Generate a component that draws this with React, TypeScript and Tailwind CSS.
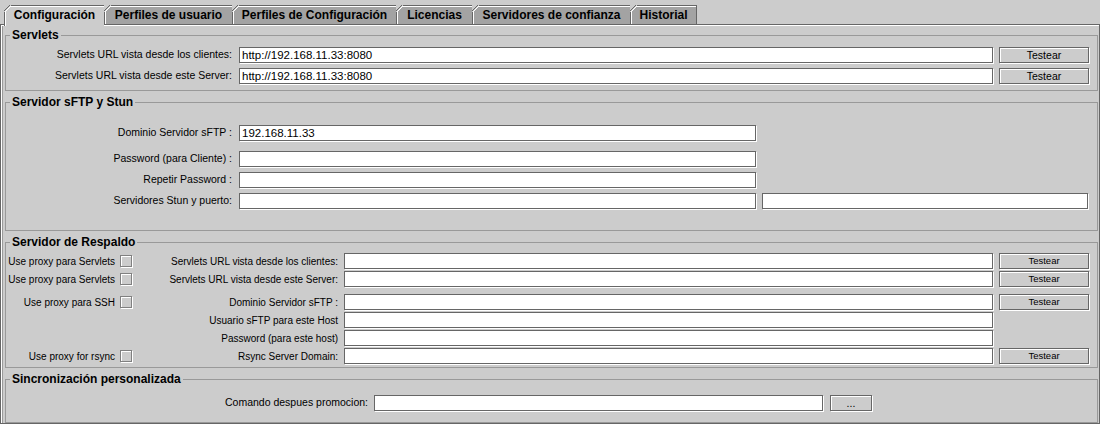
import React from "react";

const TABS = [
  { label: "Configuración", w: "w-[100px]", active: true },
  { label: "Perfiles de usuario", w: "w-[128px]" },
  { label: "Perfiles de Configuración", w: "w-[164px]" },
  { label: "Licencias", w: "w-[76px]" },
  { label: "Servidores de confianza", w: "w-[158px]" },
  { label: "Historial", w: "w-[67px]", last: true },
];

function TabCorner() {
  return (
    <svg
      className="absolute left-[-1px] top-[-1px]"
      width="7"
      height="7"
      viewBox="0 0 7 7"
      shapeRendering="crispEdges"
    >
      <polygon points="0,0 7,0 0,7" fill="#cccccc" />
      <path d="M0 6 L6 0" stroke="#666666" />
      <path d="M1 7 L7 1" stroke="#ffffff" />
    </svg>
  );
}

function Field({ w, value = "" }: { w: string; value?: string }) {
  return (
    <input
      readOnly
      defaultValue={value}
      className={`${w} h-[16px] shrink-0 border border-[#666666] bg-white pl-[2px] text-[11.5px] leading-[14px] text-black shadow-[1px_1px_0_#fff] outline-none`}
    />
  );
}

function Btn({ children, cls }: { children: React.ReactNode; cls: string }) {
  return (
    <button
      className={`${cls} h-[16px] shrink-0 border border-[#666666] bg-[#cccccc] leading-[14px] text-black shadow-[inset_1px_1px_0_#fff,1px_1px_0_#fff]`}
    >
      {children}
    </button>
  );
}

function Check() {
  return (
    <span className="h-[12px] w-[12px] shrink-0 border border-[#808080] bg-[#cccccc] shadow-[inset_1px_1px_0_#fff,1px_1px_0_#fff]" />
  );
}

function Group({
  title,
  cls,
  children,
}: {
  title: string;
  cls: string;
  children: React.ReactNode;
}) {
  return (
    <fieldset className={`${cls} w-[1093px] border border-[#999999]`}>
      <legend className="ml-[4px] px-[2px] text-[12px] font-bold leading-[14px] text-black">
        {title}
      </legend>
      {children}
    </fieldset>
  );
}

function Row({
  label,
  children,
}: {
  label: string;
  children: React.ReactNode;
}) {
  return (
    <div className="flex h-[16px] items-center">
      <div className="w-[233px] shrink-0 pr-[7px] text-right text-[10.5px]">{label}</div>
      {children}
    </div>
  );
}

function BackupRow({
  proxy,
  label,
  test,
}: {
  proxy?: string;
  label: string;
  test?: boolean;
}) {
  return (
    <div className="flex h-[16px] items-center text-[10px]">
      <div className="flex w-[128px] shrink-0 items-center justify-end gap-[5px] pr-[2px]">
        {proxy && (
          <>
            <span className="whitespace-nowrap">{proxy}</span>
            <Check />
          </>
        )}
      </div>
      <div className="w-[210px] shrink-0 whitespace-nowrap pr-[6px] text-right">{label}</div>
      <Field w="w-[649px]" />
      {test && <Btn cls="ml-[6px] w-[90px] text-[9.5px]">Testear</Btn>}
    </div>
  );
}

export default function App() {
  return (
    <div className="h-[424px] w-[1100px] overflow-hidden bg-[#cccccc] font-['Liberation_Sans',Arial,sans-serif] text-black">
      {/* tabs */}
      <div className="flex h-[24px] items-end pl-[4px]">
        {TABS.map((t) => (
          <div
            key={t.label}
            className={`${t.w} relative flex shrink-0 items-center justify-center border-l border-t border-[#666666] text-[12px] font-bold shadow-[inset_1px_1px_0_#fff] ${
              t.active ? "z-10 -mb-[2px] h-[21px] bg-[#cccccc] pb-[2px]" : "h-[19px] bg-[#a3a3a3]"
            } ${t.last ? "border-r" : ""}`}
          >
            <TabCorner />
            {t.label}
          </div>
        ))}
      </div>

      {/* content */}
      <div className="flex h-[400px] flex-col gap-[4px] border border-[#666666] pl-[4px] pr-[1px] pt-[3px] shadow-[inset_1px_1px_0_#fff,inset_2px_0_0_#999]">
        <Group title="Servlets" cls="pt-[5px] pb-[6px]">
          <div className="flex flex-col gap-[5px]">
            <Row label="Servlets URL vista desde los clientes:">
              <Field w="w-[754px]" value="http://192.168.11.33:8080" />
              <Btn cls="ml-[6px] w-[90px] text-[10.5px]">Testear</Btn>
            </Row>
            <Row label="Servlets URL vista desde este Server:">
              <Field w="w-[754px]" value="http://192.168.11.33:8080" />
              <Btn cls="ml-[6px] w-[90px] text-[10.5px]">Testear</Btn>
            </Row>
          </div>
        </Group>

        <Group title="Servidor sFTP y Stun" cls="pt-[16px] pb-[21px]">
          <div className="flex flex-col gap-[5px]">
            <div className="mb-[5px]">
              <Row label="Dominio Servidor sFTP :">
                <Field w="w-[517px]" value="192.168.11.33" />
              </Row>
            </div>
            <Row label="Password (para Cliente) :">
              <Field w="w-[517px]" />
            </Row>
            <Row label="Repetir Password :">
              <Field w="w-[517px]" />
            </Row>
            <Row label="Servidores Stun y puerto:">
              <Field w="w-[517px]" />
              <div className="ml-[6px] flex">
                <Field w="w-[326px]" />
              </div>
            </Row>
          </div>
        </Group>

        <Group title="Servidor de Respaldo" cls="pt-[4px] pb-[3px]">
          <div className="flex flex-col gap-[2px]">
            <BackupRow proxy="Use proxy para Servlets" label="Servlets URL vista desde los clientes:" test />
            <BackupRow proxy="Use proxy para Servlets" label="Servlets URL vista desde este Server:" test />
            <div className="mt-[5px]">
              <BackupRow proxy="Use proxy para SSH" label="Dominio Servidor sFTP :" test />
            </div>
            <BackupRow label="Usuario sFTP para este Host" />
            <BackupRow label="Password (para este host)" />
            <BackupRow proxy="Use proxy for rsync" label="Rsync Server Domain:" test />
          </div>
        </Group>

        <Group title="Sincronización personalizada" cls="pt-[9px] pb-[11px]">
          <div className="flex h-[16px] items-center">
            <div className="w-[368px] shrink-0 pr-[6px] text-right text-[10.5px]">
              Comando despues promocion:
            </div>
            <Field w="w-[449px]" />
            <Btn cls="ml-[7px] w-[42px] text-[10.5px]">...</Btn>
          </div>
        </Group>
      </div>
    </div>
  );
}
